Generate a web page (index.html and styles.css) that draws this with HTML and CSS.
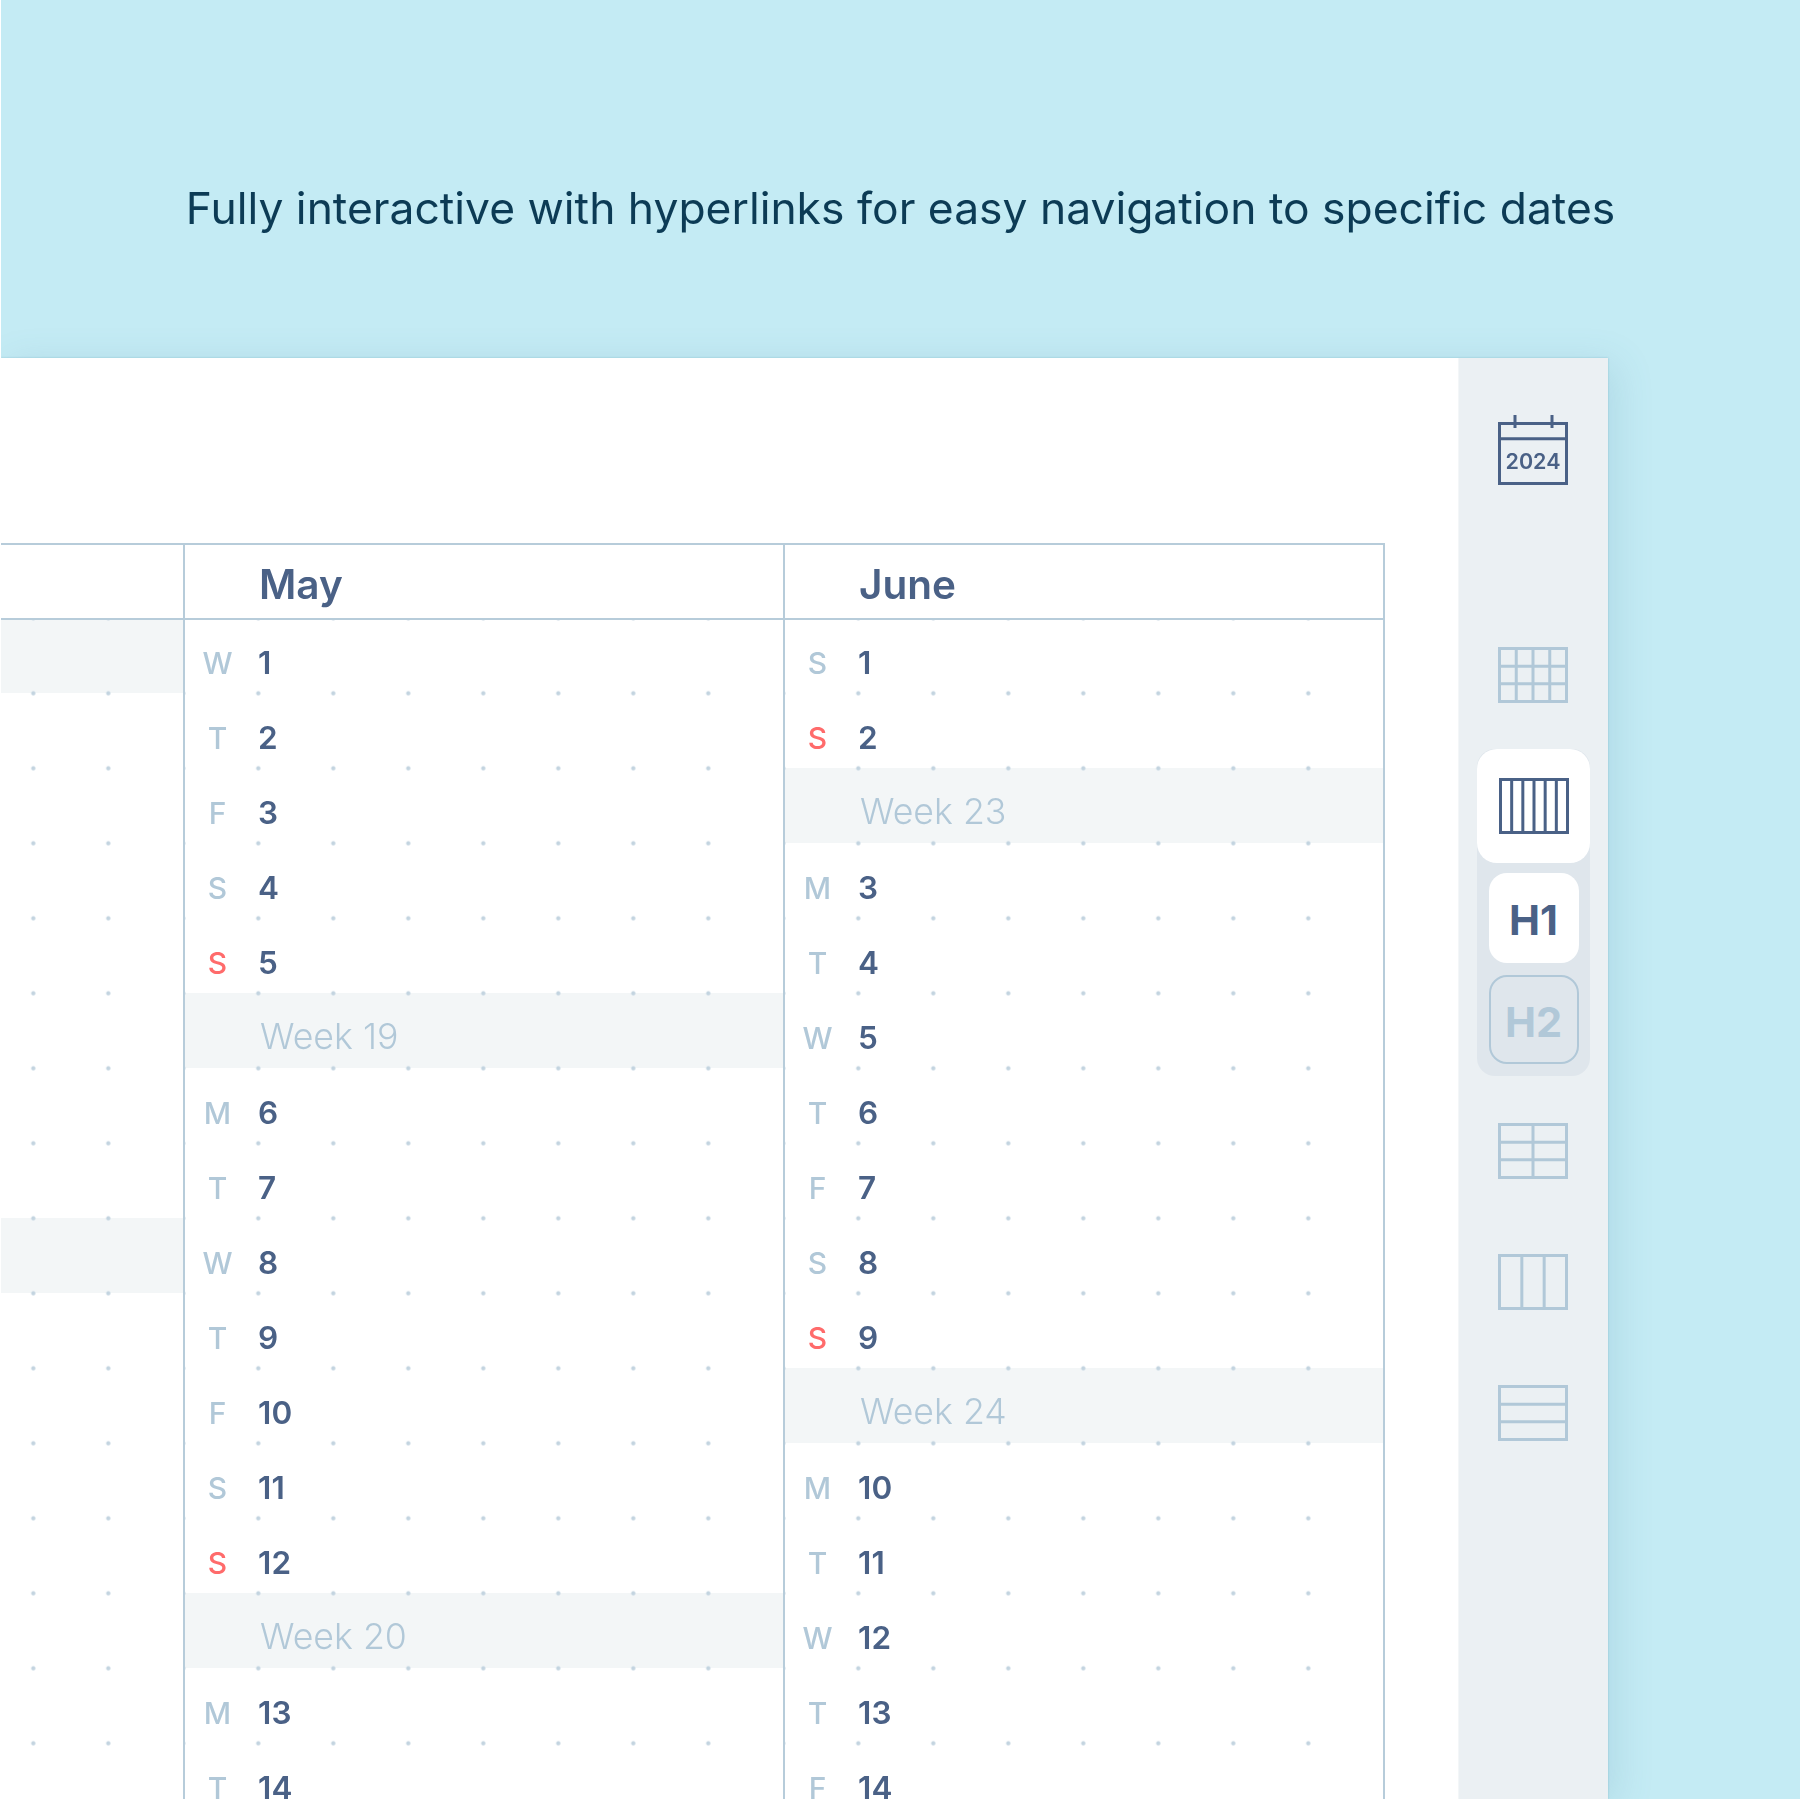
FILE: index.html
```html
<!DOCTYPE html>
<html lang="en">
<head>
<meta charset="utf-8">
<title>Calendar navigation</title>
<link rel="stylesheet" href="styles.css">
</head>
<body>
<div class="page">
  <header class="hero"><h1 class="hero-title">Fully interactive with hyperlinks for easy navigation to specific dates</h1></header>
  <div class="sheet">
    <main class="content">
      <div class="table">
        <section class="col col-first">
          <div class="col-head"></div>
          <div class="col-body">
            <div class="row band"></div><div class="row"></div><div class="row"></div><div class="row"></div>
            <div class="row"></div><div class="row"></div><div class="row"></div><div class="row"></div>
            <div class="row band"></div><div class="row"></div><div class="row"></div><div class="row"></div>
            <div class="row"></div><div class="row"></div><div class="row"></div><div class="row"></div>
          </div>
        </section>
        <section class="col">
          <div class="col-head">May</div>
          <div class="col-body">
            <div class="row"><span class="dow">W</span><span class="num">1</span></div>
            <div class="row"><span class="dow">T</span><span class="num">2</span></div>
            <div class="row"><span class="dow">F</span><span class="num">3</span></div>
            <div class="row"><span class="dow">S</span><span class="num">4</span></div>
            <div class="row"><span class="dow sun">S</span><span class="num">5</span></div>
            <div class="row band"><span class="week">Week 19</span></div>
            <div class="row"><span class="dow">M</span><span class="num">6</span></div>
            <div class="row"><span class="dow">T</span><span class="num">7</span></div>
            <div class="row"><span class="dow">W</span><span class="num">8</span></div>
            <div class="row"><span class="dow">T</span><span class="num">9</span></div>
            <div class="row"><span class="dow">F</span><span class="num">10</span></div>
            <div class="row"><span class="dow">S</span><span class="num">11</span></div>
            <div class="row"><span class="dow sun">S</span><span class="num">12</span></div>
            <div class="row band"><span class="week">Week 20</span></div>
            <div class="row"><span class="dow">M</span><span class="num">13</span></div>
            <div class="row"><span class="dow">T</span><span class="num">14</span></div>
          </div>
        </section>
        <section class="col">
          <div class="col-head">June</div>
          <div class="col-body">
            <div class="row"><span class="dow">S</span><span class="num">1</span></div>
            <div class="row"><span class="dow sun">S</span><span class="num">2</span></div>
            <div class="row band"><span class="week">Week 23</span></div>
            <div class="row"><span class="dow">M</span><span class="num">3</span></div>
            <div class="row"><span class="dow">T</span><span class="num">4</span></div>
            <div class="row"><span class="dow">W</span><span class="num">5</span></div>
            <div class="row"><span class="dow">T</span><span class="num">6</span></div>
            <div class="row"><span class="dow">F</span><span class="num">7</span></div>
            <div class="row"><span class="dow">S</span><span class="num">8</span></div>
            <div class="row"><span class="dow sun">S</span><span class="num">9</span></div>
            <div class="row band"><span class="week">Week 24</span></div>
            <div class="row"><span class="dow">M</span><span class="num">10</span></div>
            <div class="row"><span class="dow">T</span><span class="num">11</span></div>
            <div class="row"><span class="dow">W</span><span class="num">12</span></div>
            <div class="row"><span class="dow">T</span><span class="num">13</span></div>
            <div class="row"><span class="dow">F</span><span class="num">14</span></div>
          </div>
        </section>
      </div>
    </main>
    <aside class="rail">
      <svg class="icon-cal" width="72" height="72" viewBox="0 0 72 72" aria-label="2024">
        <path class="stroke-dark" d="M2.500 8.500h67v60h-67zM2.500 23.700h67M18 0v13M55 0v13"/>
        <text class="cal-year" x="36" y="54" text-anchor="middle">2024</text>
      </svg>
      <svg class="icon icon-year" width="72" height="58" viewBox="0 0 72 58">
        <path class="stroke-light" d="M2.500 2.500h67v53h-67zM2.500 20.170h67M2.500 37.830h67M19.250 2.500v53M36 2.500v53M52.750 2.500v53"/>
      </svg>
      <div class="group">
        <div class="group-top">
          <svg width="72" height="58" viewBox="0 0 72 58">
            <path class="stroke-dark" d="M2.500 2.500h67v53h-67zM13.670 2.500v53M24.830 2.500v53M36 2.500v53M47.170 2.500v53M58.330 2.500v53"/>
          </svg>
        </div>
        <div class="half half-on">H1</div>
        <div class="half half-off">H2</div>
      </div>
      <svg class="icon icon-months" width="72" height="58" viewBox="0 0 72 58">
        <path class="stroke-light" d="M2.500 2.500h67v53h-67zM2.500 20.170h67M2.500 37.830h67M36 2.500v53"/>
      </svg>
      <svg class="icon icon-next" width="72" height="58" viewBox="0 0 72 58">
        <path class="stroke-light" d="M2.500 2.500h67v53h-67zM24.830 2.500v53M47.170 2.500v53"/>
      </svg>
      <svg class="icon icon-next" width="72" height="58" viewBox="0 0 72 58">
        <path class="stroke-light" d="M2.500 2.500h67v53h-67zM2.500 20.170h67M2.500 37.830h67"/>
      </svg>
    </aside>
  </div>
</div>
</body>
</html>
```
FILE: styles.css
```css
* { box-sizing: border-box; }
html, body { margin: 0; padding: 0; }
body {
  width: 1800px;
  height: 1799px;
  overflow: hidden;
  background: #fff;
  font-family: Inter, "Liberation Sans", sans-serif;
}
.page {
  margin-left: 1px;
  height: 1799px;
  background: #c4ebf4;
  overflow: hidden;
}
.hero {
  height: 358px;
  padding-top: 57px;
  display: flex;
  align-items: center;
  justify-content: center;
}
.hero-title {
  margin: 0;
  font-size: 44.4px;
  line-height: 56px;
  font-weight: 400;
  color: #0c3b55;
  white-space: nowrap;
  filter: blur(.35px);
}
.sheet {
  width: 1607px;
  height: 1441px;
  display: flex;
  background: #fff;
  box-shadow: 0 0 2px rgba(90, 160, 180, .45), 8px 6px 36px rgba(70, 130, 160, .16);
}
.content {
  width: 1457px;
  padding-top: 185px;
  overflow: hidden;
}
.table {
  display: flex;
  width: 1384px;
  border-top: 2px solid #b7ccda;
  border-right: 2px solid #b7ccda;
  filter: blur(.35px);
}
.col { width: 600px; border-left: 2px solid #b7ccda; }
.col-first { width: 182px; border-left: 0; }
.col-head {
  position: relative;
  z-index: 1;
  height: 75px;
  padding-left: 74px;
  border-bottom: 2px solid #b7ccda;
  font-size: 40.500px;
  line-height: 79px;
  font-weight: 600;
  color: #4a6186;
}
.col-body {
  position: relative;
  margin-top: -2px;
}
.col-body::after {
  content: "";
  position: absolute;
  top: 0;
  right: 10px;
  bottom: 0;
  left: 0;
  background-image: radial-gradient(circle at center, #c3d4e0 0, #c3d4e0 1.6px, rgba(195, 212, 224, 0) 2.6px);
  background-size: 75px 75px;
  background-position: 35.8px 37.800px;
}
.col-first .col-body::after { background-position: -5.2px 37.800px; }
.row {
  height: 75px;
  display: flex;
  align-items: center;
  padding-top: 14px;
}
.band { background: #f3f6f7; padding-top: 10px; }
.dow {
  width: 65px;
  margin-right: 8px;
  text-align: center;
  font-size: 30px;
  font-weight: 500;
  color: #b1c8d8;
}
.sun { color: #ff6b6b; }
.num {
  font-size: 31.500px;
  font-weight: 600;
  letter-spacing: .3px;
  color: #4a6186;
}
.week {
  padding-left: 75px;
  font-size: 35.700px;
  font-weight: 300;
  color: #b1c8d8;
}
.rail {
  width: 150px;
  padding-top: 57px;
  padding-right: 1px;
  display: flex;
  flex-direction: column;
  align-items: center;
  background: #ebf0f3;
  border-left: 1px solid #f3f6f8;
}
.rail svg { display: block; flex: none; filter: blur(.35px); }
.stroke-dark, .stroke-light { fill: none; stroke-width: 3; }
.stroke-dark { stroke: #4a6186; }
.stroke-light { stroke: #b1c8d8; }
.cal-year {
  font-family: Inter, "Liberation Sans", sans-serif;
  font-size: 21.500px;
  font-weight: 600;
  fill: #4a6186;
}
.icon-year { margin-top: 159px; }
.group {
  width: 113px;
  margin-top: 45px;
  margin-left: 1px;
  padding-bottom: 12px;
  display: flex;
  flex-direction: column;
  align-items: center;
  background: #dfe6ec;
  border-radius: 18px;
}
.group-top {
  width: 113px;
  height: 114px;
  display: flex;
  align-items: center;
  justify-content: center;
  background: #fff;
  border-radius: 20px;
}
.half {
  width: 90px;
  display: flex;
  align-items: center;
  justify-content: center;
  padding-top: 4px;
  border-radius: 18px;
  font-size: 41.500px;
  font-weight: 650;
}
.half-on {
  height: 90px;
  margin-top: 10px;
  background: #fff;
  color: #4a6186;
}
.half-off {
  height: 89px;
  margin-top: 12px;
  border: 2px solid #b1c8d8;
  color: #b1c8d8;
}
.icon-months { margin-top: 46px; }
.icon-next { margin-top: 73px; }
```
